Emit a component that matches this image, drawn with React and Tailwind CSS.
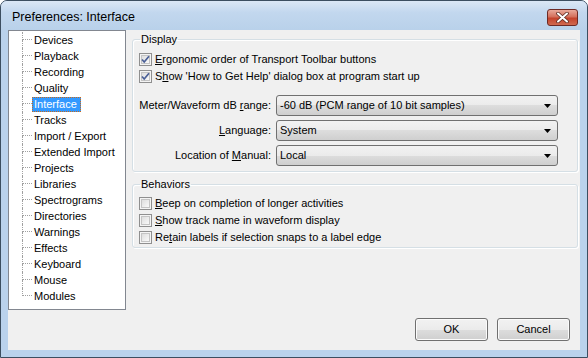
import React from 'react';

const TREE = [
  'Devices', 'Playback', 'Recording', 'Quality', 'Interface', 'Tracks',
  'Import / Export', 'Extended Import', 'Projects', 'Libraries', 'Spectrograms',
  'Directories', 'Warnings', 'Effects', 'Keyboard', 'Mouse', 'Modules',
];

function CheckBox({ checked }) {
  return (
    <svg width="13" height="13" viewBox="0 0 13 13" className="shrink-0">
      <defs>
        <linearGradient id="cbg" x1="0" y1="0" x2="1" y2="1">
          <stop offset="0" stopColor="#dcdcdc" />
          <stop offset="1" stopColor="#fbfbfb" />
        </linearGradient>
      </defs>
      <rect x="0.5" y="0.5" width="12" height="12" fill="#f4f4f4" stroke="#8f8f8f" />
      <rect x="2.5" y="2.5" width="8" height="8" fill="url(#cbg)" stroke="#c4c4c4" />
      {checked && (
        <path d="M3 6.5 L5.2 9 L10 3.2" fill="none" stroke="#4a5f97" strokeWidth="1.7" />
      )}
    </svg>
  );
}

function Check({ checked, pre, u, post }) {
  return (
    <div className="flex h-[17px] items-center gap-[3px]">
      <CheckBox checked={checked} />
      <span>
        {pre}<span className="underline">{u}</span>{post}
      </span>
    </div>
  );
}

function Combo({ pre, u, post, value }) {
  return (
    <div className="flex items-center">
      <span className="w-[137px] pr-[5px] text-right">
        {pre}<span className="underline">{u}</span>{post}
      </span>
      <div className="flex h-[21px] w-[282px] items-center justify-between rounded-[3px] border border-[#707070] bg-[linear-gradient(#f2f2f2_0%,#ebebeb_50%,#dddddd_50%,#cfcfcf_100%)] pl-[3px] pr-[6px]">
        <span>{value}</span>
        <svg width="7" height="4" viewBox="0 0 7 4">
          <path d="M0 0 H7 L3.5 4 Z" fill="#000" />
        </svg>
      </div>
    </div>
  );
}

function Button({ children }) {
  return (
    <div className="flex h-[23px] w-[73px] items-center justify-center rounded-[3px] border border-[#707070] bg-[linear-gradient(#f2f2f2_0%,#ebebeb_50%,#dddddd_50%,#cfcfcf_100%)] shadow-[inset_0_0_0_1px_#fbfbfb]">
      {children}
    </div>
  );
}

export default function App() {
  return (
    <div
      className="flex h-[358px] w-[588px] flex-col rounded-t-[7px] border border-[#3c4e60] bg-[#bad2ec] text-[11px] text-black"
      style={{ fontFamily: '"Liberation Sans", Arial, sans-serif' }}
    >
      {/* title bar */}
      <div className="flex h-[29px] shrink-0 items-center justify-between rounded-t-[6px] bg-[linear-gradient(#dbe7f5,#c2d7ee_40%,#b9d1ea)] pl-[11px] pr-[9px]">
        <span className="pt-[4px] text-[12.5px]">Preferences: Interface</span>
        <div className="mt-[3px] flex h-[17px] w-[31px] items-center justify-center rounded-[3px] border border-[#6d2a25] bg-[linear-gradient(#e9a99a,#d4705c_45%,#c4432c_55%,#d06a50)]">
          <svg width="13" height="11" viewBox="0 0 13 11">
            <path d="M2 1.5 L11 9.5 M11 1.5 L2 9.5" stroke="#5b2a22" strokeWidth="3.6" strokeLinecap="round" />
            <path d="M2 1.5 L11 9.5 M11 1.5 L2 9.5" stroke="#fff" strokeWidth="2" strokeLinecap="round" />
          </svg>
        </div>
      </div>

      {/* client */}
      <div className="mx-[7px] flex h-[320px] flex-col bg-[#f0f0f0]">
        <div className="flex">
          <div className="h-[280px] w-[118px] shrink-0 border border-[#828790] bg-white pt-[1px]">
            {TREE.map((t, i) => {
              const last = i === TREE.length - 1;
              const sel = t === 'Interface';
              return (
                <div key={t} className="flex h-[16px] items-center">
                  <div className="ml-[13px] flex h-[16px] w-[10px] flex-col">
                    <div className="h-[8px] border-b border-l border-dotted border-[#a0a0a0]" />
                    <div className={'h-[8px] border-dotted border-[#a0a0a0] ' + (last ? '' : 'border-l')} />
                  </div>
                  <span
                    className={
                      'whitespace-nowrap border border-dotted px-[1px] leading-[13px] ' +
                      (sel ? 'border-[#c86a1a] bg-[#3399ff] pr-[3px] text-white' : 'border-transparent')
                    }
                  >
                    {t}
                  </span>
                </div>
              );
            })}
          </div>

          <div className="ml-[6px] mt-[3px] w-[446px]">
            <fieldset className="rounded-[3px] border border-[#d5dfe5] px-[6px] pb-[5px] pt-[5px] shadow-[inset_1px_1px_0_#fff,1px_1px_0_#fff]">
              <legend className="ml-[1px] px-[1px] leading-[13px]">Display</legend>
              <Check checked pre="" u="E" post="rgonomic order of Transport Toolbar buttons" />
              <Check checked pre="S" u="h" post="ow 'How to Get Help' dialog box at program start up" />
              <div className="mt-[10px] flex flex-col gap-[4px]">
                <Combo pre="Meter/Waveform dB " u="r" post="ange:" value="-60 dB (PCM range of 10 bit samples)" />
                <Combo pre="" u="L" post="anguage:" value="System" />
                <Combo pre="Location of " u="M" post="anual:" value="Local" />
              </div>
            </fieldset>

            <fieldset className="mt-[6px] rounded-[3px] border border-[#d5dfe5] px-[6px] pb-[1px] pt-[4px] shadow-[inset_1px_1px_0_#fff,1px_1px_0_#fff]">
              <legend className="ml-[1px] px-[1px] leading-[13px]">Behaviors</legend>
              <Check pre="" u="B" post="eep on completion of longer activities" />
              <Check pre="" u="S" post="how track name in waveform display" />
              <Check pre="Re" u="t" post="ain labels if selection snaps to a label edge" />
            </fieldset>
          </div>
        </div>

        <div className="mr-[10px] mt-[8px] flex justify-end gap-[9px]">
          <Button>OK</Button>
          <Button>Cancel</Button>
        </div>
      </div>
    </div>
  );
}
